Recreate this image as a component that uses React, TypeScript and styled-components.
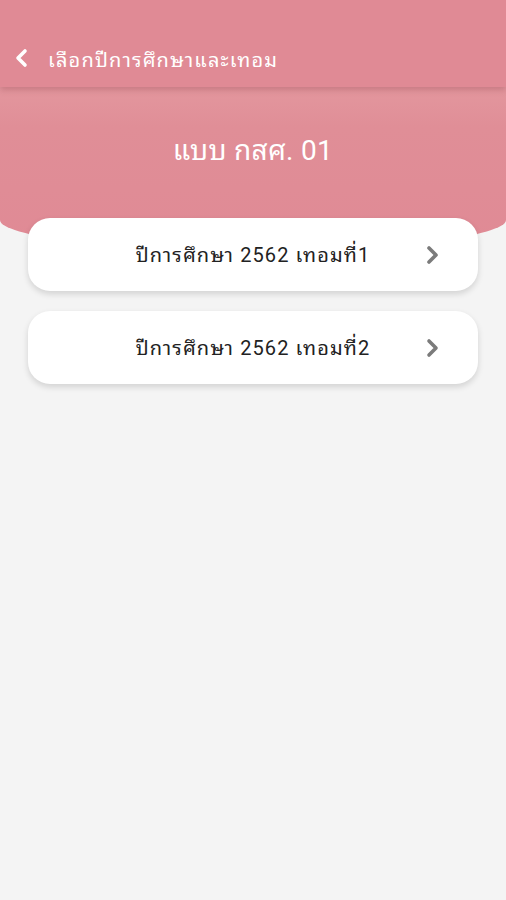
import { FC } from "react";
import styled, { createGlobalStyle } from "styled-components";

const GlobalStyle = createGlobalStyle`
  body {
    margin: 0;
    background: #f4f4f4;
    font-family: Roboto, "Noto Sans Thai Looped", "Noto Sans Thai", sans-serif;
  }
`;

const terms = [
  { id: 1, label: "ปีการศึกษา 2562 เทอมที่1" },
  { id: 2, label: "ปีการศึกษา 2562 เทอมที่2" },
];

const BackIcon: FC = () => (
  <svg width="14" height="20" viewBox="0 0 14 20">
    <polyline
      points="11,3 4,10 11,17"
      fill="none"
      stroke="#fff"
      strokeWidth="3.6"
      strokeLinecap="round"
      strokeLinejoin="round"
    />
  </svg>
);

const NextIcon: FC = () => (
  <svg width="14" height="20" viewBox="0 0 14 20">
    <polyline
      points="3,3 10,10 3,17"
      fill="none"
      stroke="#7b7b7b"
      strokeWidth="3.6"
      strokeLinecap="round"
      strokeLinejoin="round"
    />
  </svg>
);

export default function App() {
  return (
    <>
      <GlobalStyle />
      <Page>
        <Header>
          <BackButton>
            <BackIcon />
          </BackButton>
          <HeaderTitle>เลือกปีการศึกษาและเทอม</HeaderTitle>
        </Header>
        <Hero>
          <HeroTitle>แบบ กสศ. 01</HeroTitle>
        </Hero>
        <TermList>
          {terms.map((term) => (
            <TermCard key={term.id}>
              <TermLabel>{term.label}</TermLabel>
              <Arrow>
                <NextIcon />
              </Arrow>
            </TermCard>
          ))}
        </TermList>
      </Page>
    </>
  );
}

const Page = styled.div`
  min-height: 900px;
  background: #f4f4f4;
`;

const Header = styled.header`
  position: relative;
  z-index: 2;
  height: 87px;
  box-sizing: border-box;
  padding: 28px 0 0 14px;
  display: flex;
  align-items: center;
  gap: 20px;
  background: #e08a95;
  box-shadow: 0 3px 6px rgba(120, 40, 50, 0.25);
`;

const BackButton = styled.span`
  display: flex;
  width: 14px;
  height: 20px;
`;

const HeaderTitle = styled.h1`
  margin: 0;
  color: #fff;
  font-size: 20px;
  font-weight: 400;
  letter-spacing: 1.2px;
`;

const Hero = styled.section`
  height: 163px;
  box-sizing: border-box;
  padding-top: 44px;
  display: flex;
  justify-content: center;
  background: linear-gradient(#e3979e 0px, #e08e97 40px, #e08a95 100%);
  border-radius: 0 0 50% 50% / 0 0 30px 30px;
`;

const HeroTitle = styled.h2`
  margin: 0;
  color: #fff;
  font-size: 28px;
  font-weight: 400;
  line-height: 40px;
  letter-spacing: 0.3px;
`;

const TermList = styled.div`
  position: relative;
  z-index: 1;
  margin-top: -32px;
  padding: 0 28px;
  display: flex;
  flex-direction: column;
  gap: 20px;
`;

const TermCard = styled.button`
  height: 73px;
  border: 0;
  border-radius: 22px;
  background: #fff;
  box-shadow: 0 3px 6px rgba(0, 0, 0, 0.14);
  display: grid;
  grid-template-columns: 1fr auto 1fr;
  align-items: center;
  padding: 0 38px;
  font-family: inherit;
  cursor: pointer;
`;

const TermLabel = styled.span`
  grid-column: 2;
  color: #222;
  font-size: 20px;
  line-height: 24px;
  letter-spacing: 1.1px;
`;

const Arrow = styled.span`
  grid-column: 3;
  justify-self: end;
  display: flex;
`;
